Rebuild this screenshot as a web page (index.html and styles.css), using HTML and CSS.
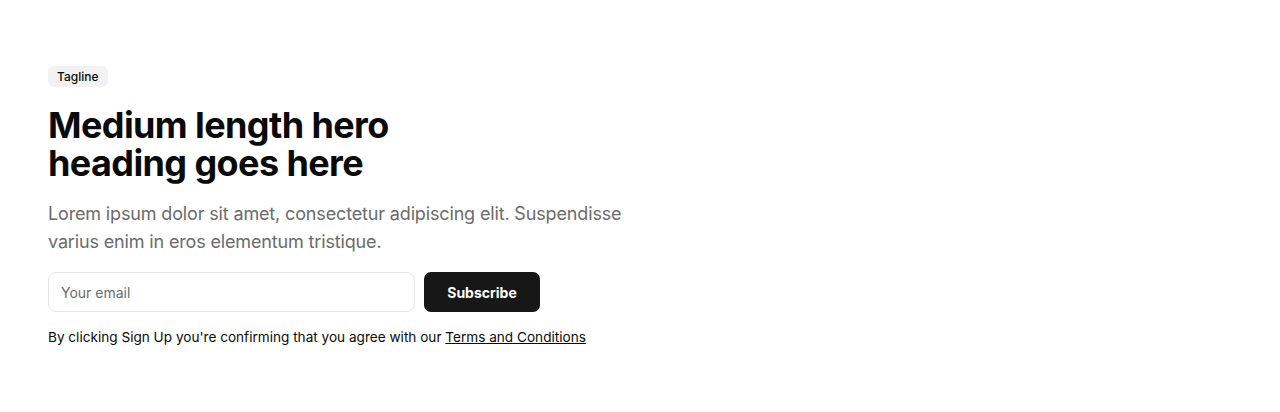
FILE: index.html
```html
<!DOCTYPE html>
<html lang="en">
<head>
<meta charset="utf-8">
<title>Hero</title>
<link rel="stylesheet" href="styles.css">
</head>
<body>
<section class="hero">
  <div class="content">
    <span class="tagline">Tagline</span>
    <h1 class="heading">Medium length hero heading goes here</h1>
    <p class="lead">Lorem ipsum dolor sit amet, consectetur adipiscing elit. Suspendisse varius enim in eros elementum tristique.</p>
    <form class="signup">
      <input class="email" type="email" placeholder="Your email">
      <button class="subscribe" type="button">Subscribe</button>
    </form>
    <p class="note">By clicking Sign Up you're confirming that you agree with our <a class="terms" href="#">Terms and Conditions</a></p>
  </div>
</section>
</body>
</html>
```
FILE: styles.css
```css
* { box-sizing: border-box; }
html, body { margin: 0; padding: 0; background: #fff; }
body {
  font-family: Inter, "Noto Sans", sans-serif;
  color: #0a0a0a;
}
.hero {
  padding: 66px 48px 40px;
}
.content {
  display: flex;
  flex-direction: column;
  align-items: flex-start;
}
.tagline {
  display: inline-block;
  background: #f2f2f2;
  border-radius: 6px;
  padding: 2px 9px;
  font-size: 12px;
  line-height: 17px;
  font-weight: 500;
  color: #0a0a0a;
}
.heading {
  margin: 19px 0 0;
  max-width: 420px;
  font-size: 36px;
  line-height: 38px;
  font-weight: 700;
  letter-spacing: -0.6px;
  color: #0a0a0a;
}
.lead {
  margin: 18px 0 0;
  max-width: 600px;
  font-size: 18px;
  line-height: 28px;
  letter-spacing: -0.15px;
  color: #6b6b6b;
}
.signup {
  display: flex;
  gap: 9px;
  margin-top: 16px;
}
.email {
  width: 367px;
  height: 40px;
  border: 1px solid #e5e5e5;
  border-radius: 8px;
  padding: 0 12px;
  font-family: inherit;
  font-size: 14px;
  color: #0a0a0a;
  background: #fff;
  outline: none;
}
.email::placeholder { color: #6b6b6b; }
.subscribe {
  width: 116px;
  height: 40px;
  border: 0;
  border-radius: 7px;
  background: #171717;
  color: #fff;
  font-family: inherit;
  font-size: 14px;
  font-weight: 700;
  cursor: pointer;
}
.note {
  margin: 15px 0 0;
  font-size: 13.6px;
  line-height: 20px;
  color: #0a0a0a;
}
.terms {
  color: #0a0a0a;
  text-decoration: underline;
}
```
